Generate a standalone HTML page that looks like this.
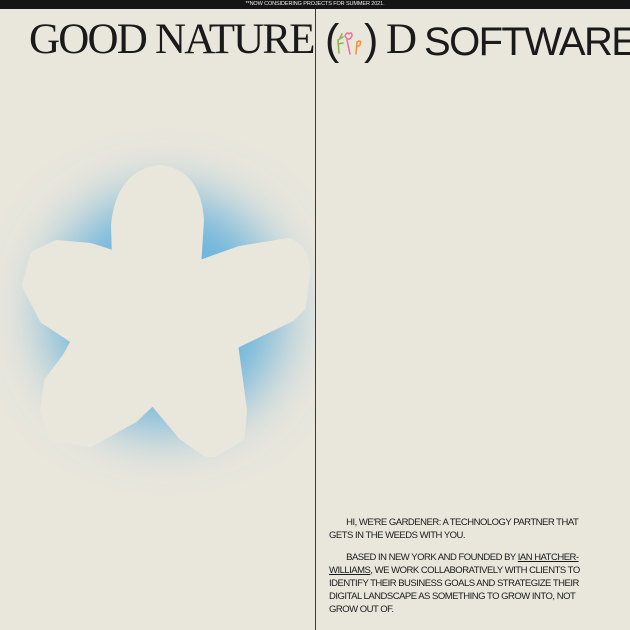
<!DOCTYPE html>
<html><head><style>
html,body{margin:0;padding:0;}
body{width:630px;height:630px;background:#e9e6dc;position:relative;overflow:hidden;font-family:"Liberation Sans",sans-serif;color:#1a1a1a;}
.bar{position:absolute;left:0;top:0;width:630px;height:9px;background:#151515;color:#eee;font-size:5.5px;line-height:9px;text-align:center;letter-spacing:-0.1px;}
.vl{position:absolute;left:315px;top:9px;width:1px;height:621px;background:#3a3a3a;}
.t{position:absolute;top:16px;font-size:43px;line-height:48px;white-space:nowrap;}
.serif{font-family:"Liberation Serif",serif;font-weight:normal;letter-spacing:-1.8px;left:29px;}
.p{position:absolute;left:329px;width:256px;font-size:9.5px;line-height:13px;text-transform:uppercase;letter-spacing:-0.5px;}
.p u{text-decoration:underline;}
</style></head><body>
<div class="bar">**NOW CONSIDERING PROJECTS FOR SUMMER 2021.</div>
<div class="vl"></div>
<div class="t serif">GOOD NATURE</div>
<div class="t" style="left:325px;">(</div>
<svg style="position:absolute;left:334px;top:28px" width="32" height="28" viewBox="0 0 32 28">
<path d="M5 25 L4 12 L9 9 M4 16 L9 15 M6 10 L8 6" stroke="#8fb64a" stroke-width="1.6" fill="none" stroke-linecap="round"/>
<path d="M16 26 L13 12 M11 8 Q13 3 15 6 Q18 3 18 8 Q16 12 13 11 Z" stroke="#ec6f9a" stroke-width="1.5" fill="none" stroke-linecap="round"/>
<path d="M22 26 L23 14 Q28 11 26 17 L23 19" stroke="#f2913a" stroke-width="1.5" fill="none" stroke-linecap="round"/>
</svg>
<div class="t" style="left:364px;">)</div>
<div class="t" style="left:386px;font-family:'Liberation Serif',serif;">D</div>
<div class="t" style="left:424px;font-size:40px;letter-spacing:-1.6px;top:18px;">SOFTWARE</div>
<svg style="position:absolute;left:0;top:9px" width="315" height="621" viewBox="0 9 315 621">
<defs>
<filter id="b" x="-50%" y="-50%" width="200%" height="200%"><feGaussianBlur stdDeviation="28"/></filter>
</defs>
<circle cx="165" cy="312" r="118" fill="#6cb4dd" filter="url(#b)"/>
<path fill="#e9e6dc" stroke="#e9e6dc" stroke-width="12" stroke-linejoin="round" d="M118 258 L117 225 Q122 175 160 171 Q195 175 198 220 L195 268 L240 252 L288 244 Q305 250 304 275 L300 306 L290 316 L232 344 L241 410 L239 436 L213 451 L207 451 L184 435 L153 398 L133 417 L90 441 L54 435 L46 410 L50 382 L68 358 L78 340 L45 318 L28 285 L36 256 L57 246 L90 249 Z"/>
</svg>
<div class="p" style="top:516px;">&nbsp;&nbsp;&nbsp;&nbsp;&nbsp;&nbsp;&nbsp;&nbsp;Hi, we're Gardener: a technology partner that gets in the weeds with you.</div>
<div class="p" style="top:551px;">&nbsp;&nbsp;&nbsp;&nbsp;&nbsp;&nbsp;&nbsp;&nbsp;Based in New York and founded by <u>Ian Hatcher-</u><br><u>Williams</u>, we work collaboratively with clients to identify their business goals and strategize their digital landscape as something to grow into, not grow out of.</div>
</body></html>
